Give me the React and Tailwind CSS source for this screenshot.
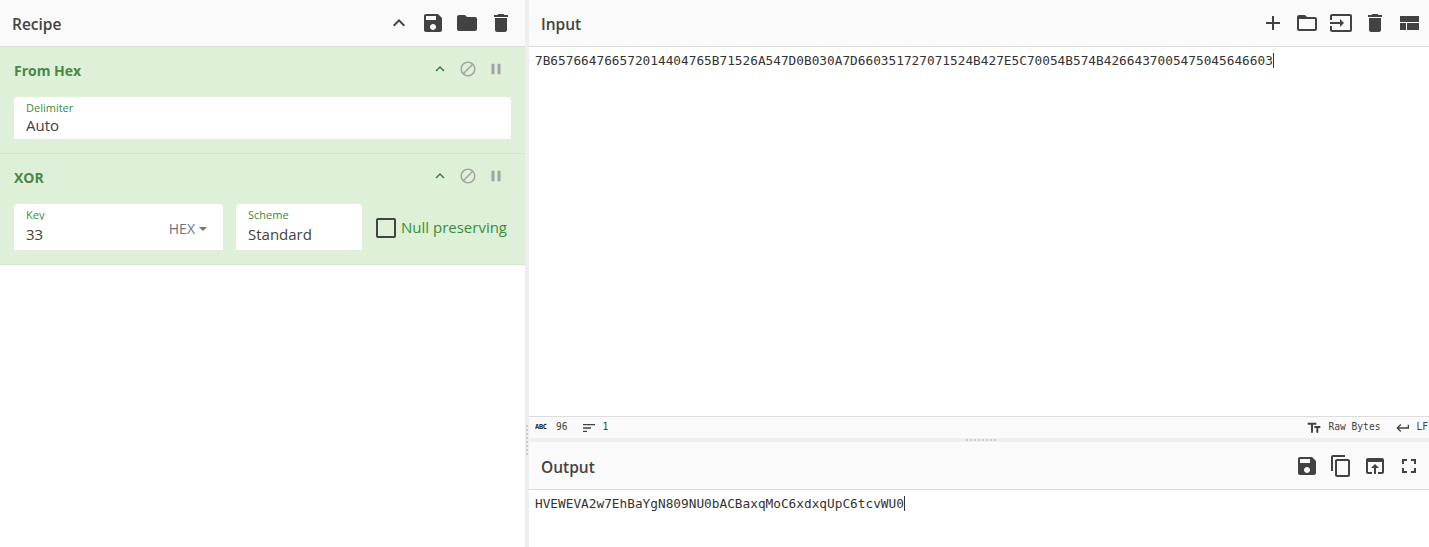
const paths = {
  up: 'M7.41 15.41L12 10.83l4.59 4.58L18 14l-6-6-6 6z',
  save: 'M17 3H5c-1.11 0-2 .9-2 2v14c0 1.1.89 2 2 2h14c1.1 0 2-.9 2-2V7l-4-4zm-5 16c-1.66 0-3-1.34-3-3s1.34-3 3-3 3 1.34 3 3-1.34 3-3 3zm3-10H5V5h10v4z',
  folder: 'M10 4H4c-1.1 0-1.99.9-1.99 2L2 18c0 1.1.9 2 2 2h16c1.1 0 2-.9 2-2V8c0-1.1-.9-2-2-2h-8l-2-2z',
  folderOpen: 'M20 6h-8l-2-2H4c-1.1 0-1.99.9-1.99 2L2 18c0 1.1.9 2 2 2h16c1.1 0 2-.9 2-2V8c0-1.1-.9-2-2-2zm0 12H4V8h16v10z',
  trash: 'M6 19c0 1.1.9 2 2 2h8c1.1 0 2-.9 2-2V7H6v12zM19 4h-3.5l-1-1h-5l-1 1H5v2h14V4z',
  block: 'M12 2C6.48 2 2 6.48 2 12s4.48 10 10 10 10-4.48 10-10S17.52 2 12 2zM4 12c0-4.42 3.58-8 8-8 1.85 0 3.55.63 4.9 1.69L5.69 16.9C4.63 15.55 4 13.85 4 12zm8 8c-1.85 0-3.55-.63-4.9-1.69L18.31 7.1C19.37 8.45 20 10.15 20 12c0 4.42-3.58 8-8 8z',
  pause: 'M6 19h4V5H6v14zm8-14v14h4V5h-4z',
  add: 'M19 13h-6v6h-2v-6H5v-2h6V5h2v6h6v2z',
  input: 'M21 3.01H3c-1.1 0-2 .9-2 2V9h2V4.99h18v14.03H3V15H1v4.01c0 1.1.9 1.98 2 1.98h18c1.1 0 2-.88 2-1.98v-14c0-1.11-.9-2-2-2zM11 16l4-4-4-4v3H1v2h10v3z',
  layout: 'M3 19h6v-7H3v7zm7 0h12v-7H10v7zM3 5v6h19V5H3z',
  copy: 'M16 1H4c-1.1 0-2 .9-2 2v14h2V3h12V1zm3 4H8c-1.1 0-2 .9-2 2v14c0 1.1.9 2 2 2h11c1.1 0 2-.9 2-2V7c0-1.1-.9-2-2-2zm0 16H8V7h11v14z',
  open: 'M19 4H5c-1.11 0-2 .9-2 2v12c0 1.1.89 2 2 2h4v-2H5V8h14v10h-4v2h4c1.1 0 2-.9 2-2V6c0-1.1-.89-2-2-2zm-7 6l-4 4h3v6h2v-6h3l-4-4z',
  fullscreen: 'M7 14H5v5h5v-2H7v-3zm-2-4h2V7h3V5H5v5zm12 7h-3v2h5v-5h-2v3zM14 5v2h3v3h2V5h-5z',
  textFields: 'M2.5 4v3h5v12h3V7h5V4h-13zm19 5h-9v3h3v7h3v-7h3V9z',
  enter: 'M19 7v4H5.83l3.58-3.59L8 6l-6 6 6 6 1.41-1.41L5.83 13H21V7z',
  sort: 'M3 18h6v-2H3v2zM3 6v2h18V6H3zm0 7h12v-2H3v2z',
};

const Icon = ({ name, className }) => (
  <svg viewBox="0 0 24 24" fill="currentColor" className={className}>
    <path d={paths[name]} />
  </svg>
);

const HeaderIcons = ({ names }) => (
  <div className="flex items-center gap-[10px] text-[#424242]">
    {names.map((name) => (
      <Icon key={name} name={name} className="h-6 w-6" />
    ))}
  </div>
);

const OpHeader = ({ title }) => (
  <div className="flex h-[20px] items-center justify-between pr-[20px]">
    <h3 className="-mt-[2px] text-[14px] font-bold text-[#468847]">{title}</h3>
    <div className="-mt-[4px] flex items-center gap-[10px]">
      <Icon name="up" className="h-[18px] w-[18px] text-[#3c763d]" />
      <Icon name="block" className="h-[18px] w-[18px] stroke-[0.6px] text-[#a3a3a3]" />
      <Icon name="pause" className="h-[18px] w-[18px] text-[#a3a3a3]" />
    </div>
  </div>
);

const Field = ({ label, value, className, valueClass = 'mt-[3px]', children }) => (
  <div className={`relative rounded-t-[4px] bg-white px-[12px] pt-[3px] ${className}`}>
    <div className="h-[13px] overflow-hidden text-[11px] leading-[15px] text-[#388e3c]">{label}</div>
    <div className={`text-[15px] leading-[22px] text-[#424242] ${valueClass}`}>{value}</div>
    {children}
  </div>
);

const dots = [0, 1, 2, 3, 4, 5, 6, 7];

export default function App() {
  return (
    <div className="flex h-[547px] w-[1429px] overflow-hidden bg-white font-['Open_Sans',sans-serif] text-[#424242]">
      <section className="flex w-[525px] flex-col">
        <header className="flex h-[47px] items-center justify-between border-b border-[#dddddd] bg-[#fafafa] pr-[12px] pl-[12px]">
          <h2 className="mt-[4px] text-[15.5px] font-semibold">Recipe</h2>
          <HeaderIcons names={['up', 'save', 'folder', 'trash']} />
        </header>

        <div className="h-[107px] border-b border-[#d3e6cb] bg-[#dff0d8] pt-[14px] pl-[14px]">
          <OpHeader title="From Hex" />
          <Field label="Delimiter" value="Auto" valueClass="mt-[1px]" className="mt-[16px] h-[42px] w-[497px]" />
        </div>

        <div className="h-[111px] border-b border-[#d3e6cb] bg-[#dff0d8] pt-[14px] pl-[14px]">
          <OpHeader title="XOR" />
          <div className="mt-[16px] flex items-start">
            <Field label="Key" value="33" className="h-[46px] w-[209px]">
              <span className="absolute top-[14px] right-[16px] flex items-center gap-[4px] text-[14px] font-medium text-[#6c757d]">
                HEX
                <span className="h-0 w-0 border-x-[4px] border-t-[4px] border-x-transparent border-t-[#6c757d]" />
              </span>
            </Field>
            <Field label="Scheme" value="Standard" className="ml-[13px] h-[46px] w-[126px]" />
            <label className="mt-[14px] ml-[14px] flex items-center gap-[5px]">
              <span className="h-[20px] w-[20px] rounded-[2px] border-2 border-[#424242]" />
              <span className="-mt-[2px] text-[15px] leading-[20px] whitespace-nowrap text-[#388e3c]">Null preserving</span>
            </label>
          </div>
        </div>
      </section>

      <div className="flex w-[4px] flex-col items-center justify-center gap-[2px] bg-[#eeeeee] pt-[333px]">
        {dots.map((d) => (
          <span key={d} className="h-[2px] w-[2px] bg-[#cccccc]" />
        ))}
      </div>

      <main className="flex min-w-0 flex-1 flex-col">
        <header className="flex h-[47px] items-center justify-between border-b border-[#dddddd] bg-[#fafafa] pr-[8px] pl-[12px]">
          <h2 className="mt-[4px] text-[15.5px] font-semibold">Input</h2>
          <HeaderIcons names={['add', 'folderOpen', 'input', 'trash', 'layout']} />
        </header>
        <div className="h-[369px] px-[6px] pt-[5px] font-['DejaVu_Sans_Mono',monospace] text-[12.78px] leading-[17px] text-[#333333]">
          <span className="border-r border-[#333333]">7B657664766572014404765B71526A547D0B030A7D660351727071524B427E5C70054B574B4266437005475045646603</span>
        </div>

        <div className="flex h-[22px] items-center justify-between border-t border-[#dddddd] bg-[#fafafa] pr-[1px] pl-[6px] font-['DejaVu_Sans_Mono',monospace] text-[9.6px] text-[#424242]">
          <div className="flex items-center">
            <span className="w-[14px] text-[7px] leading-none font-bold tracking-[-0.3px] text-[#222222]">ABC</span>
            <span className="ml-[7px]">96</span>
            <Icon name="sort" className="ml-[13px] h-[16px] w-[16px]" />
            <span className="ml-[6px]">1</span>
          </div>
          <div className="flex items-center">
            <Icon name="textFields" className="h-[16px] w-[16px]" />
            <span className="ml-[6px]">Raw Bytes</span>
            <Icon name="enter" className="ml-[15px] h-[16px] w-[16px]" />
            <span className="ml-[5px]">LF</span>
          </div>
        </div>

        <div className="flex h-[4px] items-center justify-center gap-[2px] bg-[#eeeeee] pl-[4px]">
          {dots.map((d) => (
            <span key={d} className="h-[2px] w-[2px] bg-[#cccccc]" />
          ))}
        </div>

        <header className="flex h-[48px] items-center justify-between border-b border-[#dddddd] bg-[#fafafa] pr-[8px] pl-[12px]">
          <h2 className="mt-[4px] text-[15.5px] font-semibold">Output</h2>
          <HeaderIcons names={['save', 'copy', 'open', 'fullscreen']} />
        </header>
        <div className="flex-1 px-[6px] pt-[5px] font-['DejaVu_Sans_Mono',monospace] text-[12.78px] leading-[17px] text-[#333333]">
          <span className="border-r border-[#333333]">HVEWEVA2w7EhBaYgN809NU0bACBaxqMoC6xdxqUpC6tcvWU0</span>
        </div>
      </main>
    </div>
  );
}
